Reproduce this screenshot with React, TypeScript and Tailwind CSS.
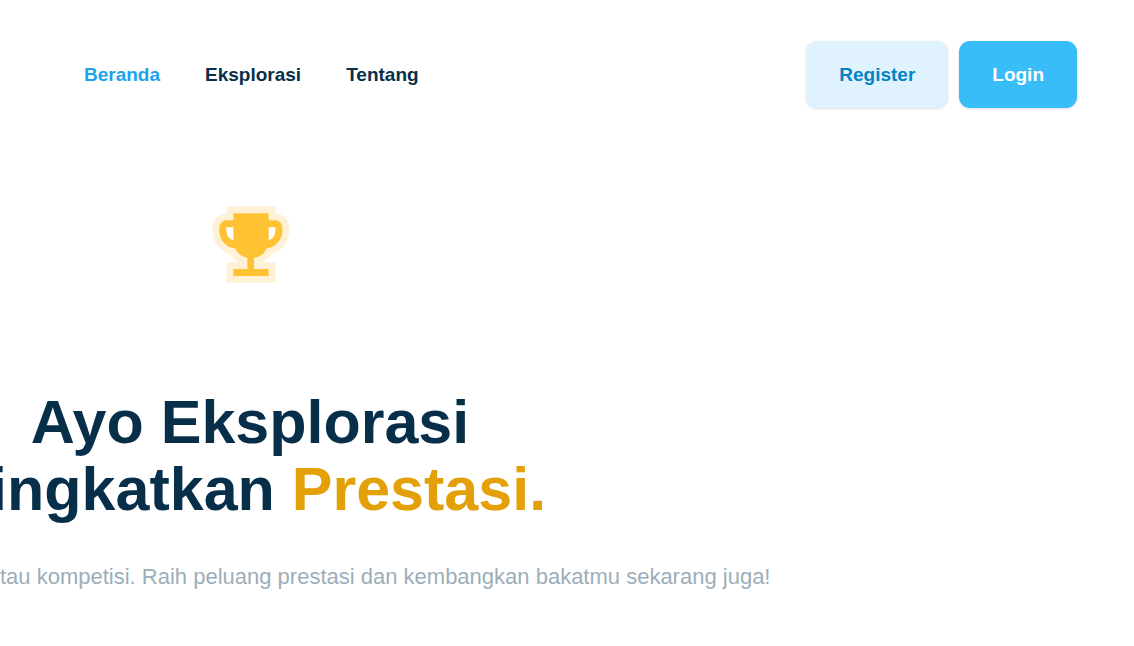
const links = [
  { label: "Beranda", href: "#beranda", active: true },
  { label: "Eksplorasi", href: "#eksplorasi", active: false },
  { label: "Tentang", href: "#tentang", active: false },
];

function Trophy() {
  return (
    <svg viewBox="0 0 300 300" className="size-[100px]" aria-hidden="true">
      <path
        d="M100 55H206V76H226A21 21 0 0 1 247 97V108A53 53 0 0 1 201 160A53 53 0 0 1 162 189V222H206V243H100V222H142V189A53 53 0 0 1 105 160A53 53 0 0 1 58 108V97A21 21 0 0 1 79 76H100Z"
        fill="#fff1d6"
        stroke="#fff1d6"
        strokeWidth="41"
        strokeLinejoin="miter"
      />
      <path
        d="M100 55H206V76H226A21 21 0 0 1 247 97V108A53 53 0 0 1 201 160A53 53 0 0 1 162 189V222H206V243H100V222H142V189A53 53 0 0 1 105 160A53 53 0 0 1 58 108V97A21 21 0 0 1 79 76H100Z"
        fill="#ffc233"
      />
      <path d="M79 97H100V136A31 31 0 0 1 79 108ZM206 97H226V108A31 31 0 0 1 206 136Z" fill="#fff" />
    </svg>
  );
}

export default function App() {
  return (
    <div className="min-h-screen overflow-x-hidden bg-white font-['Liberation_Sans',Arial,sans-serif] text-[#082f49]">
      <header className="flex items-center justify-between pt-[41px] pr-[57px] pl-[84px]">
        <nav className="flex gap-[45px] text-[19px] leading-7 font-bold">
          {links.map((link) => (
            <a key={link.label} href={link.href} className={link.active ? "text-[#1ba3ea]" : "text-[#082f49]"}>
              {link.label}
            </a>
          ))}
        </nav>
        <div className="flex gap-[11px] text-[19px] leading-[27px] font-bold">
          <button type="button" className="rounded-[11px] bg-[#e0f2fe] px-[33px] py-5 text-[#0284c7] shadow-sm">
            Register
          </button>
          <button type="button" className="rounded-[11px] bg-[#38bdf8] px-[33px] py-5 text-white shadow-sm">
            Login
          </button>
        </div>
      </header>
      <main className="pt-[87px]">
        <div className="flex w-[500px] max-w-full flex-col items-center">
          <Trophy />
          <h1 className="flex flex-col items-center pt-[94px] text-[61px] leading-[67px] font-bold whitespace-nowrap">
            <span>Ayo Eksplorasi</span>
            <span>
              Tingkatkan <span className="text-[#e3a008]">Prestasi.</span>
            </span>
          </h1>
        </div>
        <p className="pt-[38px] text-[22px] leading-8 whitespace-nowrap text-[#9caeb9]">
          tau kompetisi. Raih peluang prestasi dan kembangkan bakatmu sekarang juga!
        </p>
      </main>
    </div>
  );
}
